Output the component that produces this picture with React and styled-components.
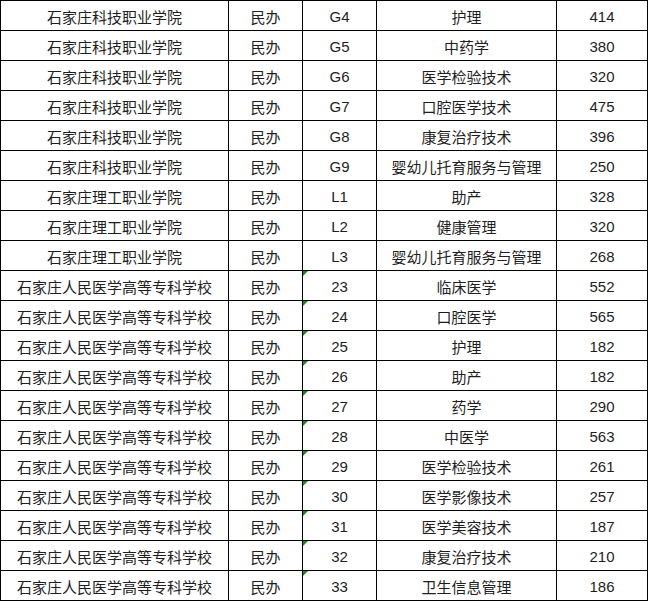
import React from 'react'
import styled, { createGlobalStyle } from 'styled-components'

const GlobalStyle = createGlobalStyle`
  html, body {
    margin: 0;
    padding: 0;
    background: #ffffff;
  }
  body {
    font-family: 'Liberation Sans', 'Noto Sans CJK SC', sans-serif;
  }
`

const Sheet = styled.div`
  display: grid;
  grid-template-columns: 228px 74px 74px 180px 91px;
  grid-auto-rows: 30px;
  width: 648px;
  border-top: 1px solid #000;
  border-left: 1px solid #000;
  box-sizing: border-box;
  background: #fff;
`

const Cell = styled.div`
  position: relative;
  box-sizing: border-box;
  display: flex;
  align-items: center;
  justify-content: center;
  padding-top: 2px;
  border-right: 1px solid #000;
  border-bottom: 1px solid #000;
  font-size: 15px;
  color: #1e1e1e;
  white-space: nowrap;
  overflow: hidden;

  ${props => props.$flag && `
    &::before {
      content: '';
      position: absolute;
      top: 0;
      left: 0;
      width: 0;
      height: 0;
      border-top: 5px solid #1a8a1a;
      border-right: 5px solid transparent;
    }
  `}
`

const rows = [
  ['石家庄科技职业学院', '民办', 'G4', '护理', '414'],
  ['石家庄科技职业学院', '民办', 'G5', '中药学', '380'],
  ['石家庄科技职业学院', '民办', 'G6', '医学检验技术', '320'],
  ['石家庄科技职业学院', '民办', 'G7', '口腔医学技术', '475'],
  ['石家庄科技职业学院', '民办', 'G8', '康复治疗技术', '396'],
  ['石家庄科技职业学院', '民办', 'G9', '婴幼儿托育服务与管理', '250'],
  ['石家庄理工职业学院', '民办', 'L1', '助产', '328'],
  ['石家庄理工职业学院', '民办', 'L2', '健康管理', '320'],
  ['石家庄理工职业学院', '民办', 'L3', '婴幼儿托育服务与管理', '268'],
  ['石家庄人民医学高等专科学校', '民办', '23', '临床医学', '552'],
  ['石家庄人民医学高等专科学校', '民办', '24', '口腔医学', '565'],
  ['石家庄人民医学高等专科学校', '民办', '25', '护理', '182'],
  ['石家庄人民医学高等专科学校', '民办', '26', '助产', '182'],
  ['石家庄人民医学高等专科学校', '民办', '27', '药学', '290'],
  ['石家庄人民医学高等专科学校', '民办', '28', '中医学', '563'],
  ['石家庄人民医学高等专科学校', '民办', '29', '医学检验技术', '261'],
  ['石家庄人民医学高等专科学校', '民办', '30', '医学影像技术', '257'],
  ['石家庄人民医学高等专科学校', '民办', '31', '医学美容技术', '187'],
  ['石家庄人民医学高等专科学校', '民办', '32', '康复治疗技术', '210'],
  ['石家庄人民医学高等专科学校', '民办', '33', '卫生信息管理', '186'],
]

export default function App() {
  return (
    <>
      <GlobalStyle />
      <Sheet>
        {rows.map((r, i) => (
          <React.Fragment key={i}>
            <Cell>{r[0]}</Cell>
            <Cell>{r[1]}</Cell>
            <Cell $flag={/^\d+$/.test(r[2])}>{r[2]}</Cell>
            <Cell>{r[3]}</Cell>
            <Cell>{r[4]}</Cell>
          </React.Fragment>
        ))}
      </Sheet>
    </>
  )
}
